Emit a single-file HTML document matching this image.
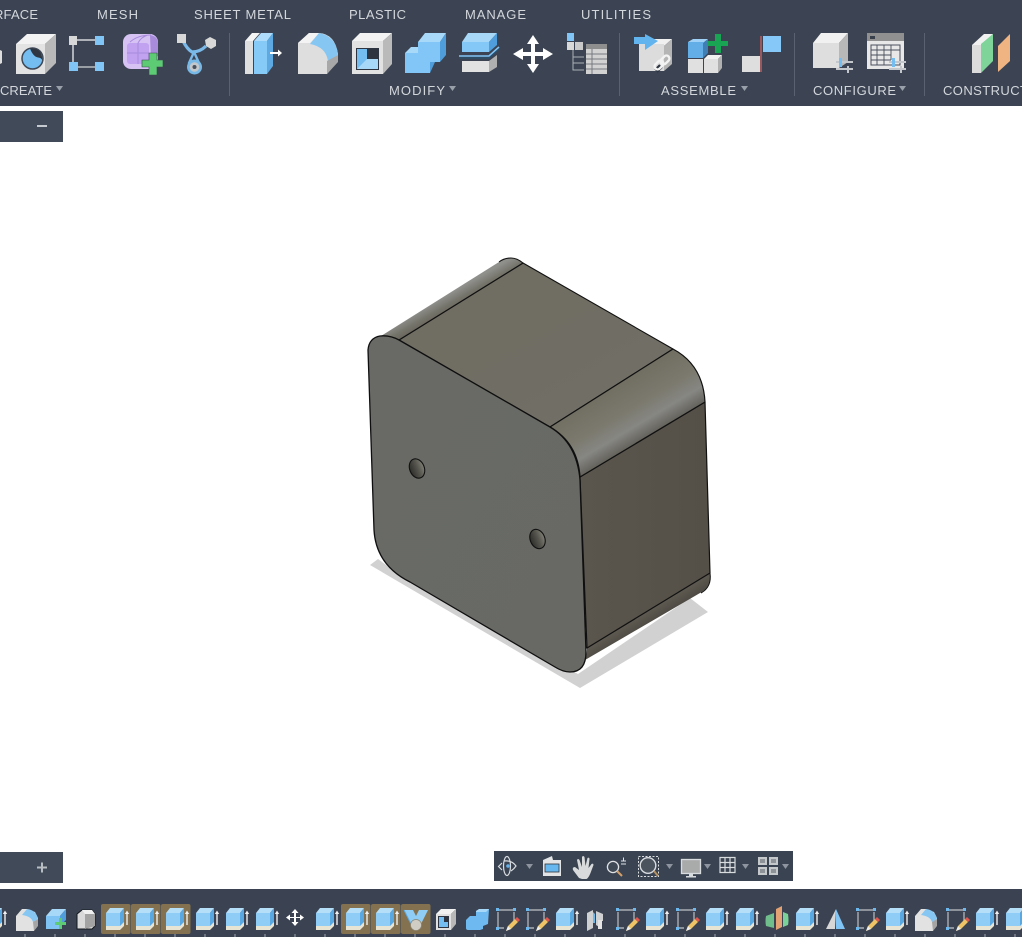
<!DOCTYPE html>
<html>
<head>
<meta charset="utf-8">
<style>
html,body{margin:0;padding:0;background:#fff;width:1022px;height:937px;overflow:hidden}
svg{display:block}
text{font-family:"Liberation Sans",sans-serif;font-size:13px;fill:#d3d7dc}
</style>
</head>
<body>
<svg width="1022" height="937" viewBox="0 0 1022 937" xmlns="http://www.w3.org/2000/svg">
<defs>
<linearGradient id="gFront" x1="0" y1="0" x2="1" y2="1"><stop offset="0" stop-color="#696a66"/><stop offset="1" stop-color="#686964"/></linearGradient>
<linearGradient id="gTop" x1="0" y1="0" x2="1" y2="1"><stop offset="0" stop-color="#6f6c60"/><stop offset="1" stop-color="#716f67"/></linearGradient>
<linearGradient id="gRight" x1="0" y1="0" x2="1" y2="0"><stop offset="0" stop-color="#5a564e"/><stop offset="1" stop-color="#544f47"/></linearGradient>
<linearGradient id="gFilletR" gradientUnits="userSpaceOnUse" x1="611" y1="388" x2="642" y2="440"><stop offset="0" stop-color="#716e62"/><stop offset=".45" stop-color="#7b796d"/><stop offset=".75" stop-color="#868683"/><stop offset="1" stop-color="#63615a"/></linearGradient>
<linearGradient id="gFilletL" gradientUnits="userSpaceOnUse" x1="440" y1="299" x2="448" y2="313"><stop offset="0" stop-color="#8f8f8c"/><stop offset=".55" stop-color="#75746b"/><stop offset="1" stop-color="#66635a"/></linearGradient>
<linearGradient id="gFilletB" gradientUnits="userSpaceOnUse" x1="644" y1="610" x2="655" y2="628"><stop offset="0" stop-color="#625e55"/><stop offset="1" stop-color="#45423c"/></linearGradient>
<linearGradient id="gHole" x1="0" y1="0" x2="1" y2="0"><stop offset="0" stop-color="#2f2f2b"/><stop offset=".55" stop-color="#55544d"/><stop offset="1" stop-color="#807f76"/></linearGradient>

<g id="ex">
<path d="M-9 21h14l4 -4v5l-4 4h-14z" fill="#e8e4d4"/>
<path d="M-9 9h14v13h-14z" fill="#8fcdf6"/>
<path d="M-9 9l4 -5h14l-4 5z" fill="#b5def9"/>
<path d="M5 9l4 -5v14l-4 4z" fill="#5aa8e2"/>
<path d="M12 21v-13" stroke="#f0f0f0" stroke-width="1.400"/>
<path d="M9.800 10l2.200 -3.500 2.200 3.500z" fill="#f0f0f0"/>
</g>
<g id="fi">
<path d="M-10 27v-15l6 -7h5l8 3 3 6v7l-4 3v3z" fill="#e2e2e2"/>
<path d="M-4 11l5 -6q9 1 11 10l-5 3q-2 -6 -11 -7z" fill="#85c6f3"/>
<path d="M7 18l5 -3v7l-4 5z" fill="#a5a5a5"/>
</g>
<g id="sk">
<path d="M-7 6h16M-7 8v16M-7 24h6M9 8v10" stroke="#a9adb3" stroke-width="1.400" fill="none"/>
<rect x="-9" y="4" width="3" height="3" fill="#6db8ee"/><rect x="8" y="4" width="3" height="3" fill="#6db8ee"/><rect x="-9" y="23" width="3" height="3" fill="#6db8ee"/>
<path d="M1 27l2 -5 7 -7 3 3 -7 7z" fill="#efc467"/>
<path d="M10 15l2 -2 3 3 -2 2z" fill="#e0564f"/>
<path d="M1 27l2 -5 3 3z" fill="#eee"/>
</g>
<g id="hl"><rect x="0" y="0" width="29.500" height="30" rx="2" fill="#83714f"/></g>
<rect id="tk" x="-1" y="0" width="2" height="4" fill="#6d7480"/>
<path id="tri" d="M0 0h7l-3.500 5z" fill="#99a0aa"/>
</defs>

<rect width="1022" height="937" fill="#fff"/>

<!-- Top toolbar -->
<rect x="0" y="0" width="1022" height="106" fill="#3c4453"/>
<text x="-6" y="19" textLength="44">RFACE</text>
<text x="97" y="19" textLength="41">MESH</text>
<text x="194" y="19" textLength="97">SHEET METAL</text>
<text x="349" y="19" textLength="57">PLASTIC</text>
<text x="465" y="19" textLength="61">MANAGE</text>
<text x="581" y="19" textLength="70">UTILITIES</text>
<text x="0" y="95" textLength="52">CREATE</text>
<text x="389" y="95" textLength="56">MODIFY</text>
<text x="661" y="95" textLength="75">ASSEMBLE</text>
<text x="813" y="95" textLength="83">CONFIGURE</text>
<text x="943" y="95" textLength="85">CONSTRUCT</text>
<use href="#tri" x="56" y="86"/><use href="#tri" x="449" y="86"/><use href="#tri" x="741" y="86"/><use href="#tri" x="899" y="86"/>
<g fill="#5a6271"><rect x="229" y="33" width="1" height="63"/><rect x="619" y="33" width="1" height="63"/><rect x="794" y="33" width="1" height="63"/><rect x="924" y="33" width="1" height="63"/></g>

<!-- Box with hole -->
<path d="M0 50l2 1v12l-2 1z" fill="#ddd"/>
<path d="M16 44l11 -10h29l-11 10z" fill="#f3f3f3"/>
<path d="M16 44h29v30h-29z" fill="#e3e3e3"/>
<path d="M45 44l11 -10v29l-11 11z" fill="#b9b9b9"/>
<circle cx="32.500" cy="58.500" r="10.500" fill="#73bdf0" stroke="#3f4856" stroke-width="1.500"/>
<path d="M30 48.500q12 -1 12.500 12q-1.500 -3 -4.500 -3q-5 -1 -8 -9z" fill="#2f3743"/>

<!-- Form edit -->
<path d="M77 40h18M73 44v18" stroke="#d5d8db" stroke-width="1.500"/>
<path d="M78 67h17" stroke="#b8bcc0" stroke-width="1.500"/>
<rect x="69" y="36" width="8" height="9" fill="#d8d8d8"/>
<rect x="95" y="36" width="9" height="9" fill="#80c5f6"/>
<rect x="69" y="62" width="9" height="9" fill="#80c5f6"/>
<rect x="95" y="62" width="9" height="9" fill="#80c5f6"/>

<!-- Purple cube -->
<rect x="123" y="34" width="35" height="35" rx="8" fill="#d6c3f4"/>
<rect x="127" y="43" width="22" height="21" rx="3" fill="#c0a2f0"/>
<path d="M150 35q8 1 8 9v12l-7 4z" fill="#a98bdc"/>
<path d="M127 53h22M138 43v21M130 42q8 -7 21 -7M138 43q3 -6 10 -8" stroke="#a98bdc" stroke-width="1" fill="none"/>
<path d="M149 53h8v7h6v7h-6v8h-8v-8h-7v-7h7z" fill="#5ccb73" stroke="#3c4453" stroke-width=".6"/>

<!-- Generative -->
<path d="M183 41q4 8 9 11q8 0 14 -6" stroke="#7ab9e8" stroke-width="3.200" fill="none"/>
<path d="M194 52l-5 11h10z" stroke="#7ab9e8" stroke-width="2.400" fill="#3c4453" stroke-linejoin="round"/>
<rect x="177" y="34" width="9" height="9" fill="#d8d8d8"/>
<path d="M205 40l5 -3 6 3 0 6 -5 3 -5 -3z" fill="#d8d8d8"/>
<circle cx="194.500" cy="67" r="7.500" fill="#78b8e6"/><circle cx="194.500" cy="67" r="4.800" fill="#c5c8cb"/><circle cx="194.500" cy="67" r="2" fill="#4a525f"/>

<!-- Press pull -->
<path d="M245 41h8v33h-8z" fill="#dfdfdf"/><path d="M245 41l7 -8h8l-7 8z" fill="#f4f4f4"/>
<path d="M254 41h13v33h-13z" fill="#86caf8"/><path d="M254 41l7 -8h12l-6 8z" fill="#aedcfa"/><path d="M267 41l6 -8v33l-6 8z" fill="#5ea9e2"/>
<path d="M270 53h9" stroke="#fff" stroke-width="2"/><path d="M278 49.500l4 3.500 -4 3.500z" fill="#fff"/>

<!-- Fillet -->
<path d="M298 74v-31l11 -10h10q16 1 19 21v7l-11 13z" fill="#dedede"/>
<path d="M298 43l11 -10h10l-9 10z" fill="#f3f3f3"/>
<path d="M310 44l9 -11q17 3 19 22l-10 6q-2 -14 -18 -17z" fill="#85c6f3"/>
<path d="M327 74v-13l11 -6v7z" fill="#a8a8a8"/>

<!-- Shell -->
<path d="M352 41l8 -8h32l-9 8z" fill="#f3f3f3"/><path d="M352 41h31v33h-31z" fill="#e2e2e2"/><path d="M383 41l9 -8v31l-9 10z" fill="#bababa"/>
<rect x="356" y="48" width="23" height="22" fill="#2e3541"/>
<path d="M357 49h10v10h11v10h-21z" fill="#73bdf0"/><path d="M357 69l10 -10h11v10z" fill="#a8d8f8"/>

<!-- Combine -->
<path d="M418 42l7 -9h21l-6 9z" fill="#a9d9f9"/>
<path d="M440 42l6 -9v22l-6 7z" fill="#4f9edb"/>
<path d="M418 42h22v20h-22z" fill="#82c6f7"/>
<path d="M405 53l6 -6h7v6z" fill="#a9d9f9"/>
<path d="M405 53h13v9h12v11h-25z" fill="#82c6f7"/>
<path d="M430 62h5l-5 11z" fill="#4f9edb"/>

<!-- Split -->
<path d="M462 42l6 -9h29l-8 9z" fill="#a8d8f8"/><path d="M462 42h27v10h-27z" fill="#84c8f8"/><path d="M489 42l8 -9v12l-8 7z" fill="#4f9edb"/>
<path d="M459 56h30l10 -9" stroke="#7fc4f6" stroke-width="1.600" fill="none"/>
<path d="M459 58h30l10 -9" stroke="#27506f" stroke-width="1.200" fill="none"/>
<path d="M462 61h27v11h-27z" fill="#e2e2e2"/><path d="M489 61l8 -6v12l-8 5z" fill="#b0b0b0"/>

<!-- Move -->
<path d="M533 35l6 9h-4v8h8v-4l10 6 -10 6v-4h-8v8h4l-6 9 -6 -9h4v-8h-8v4l-10 -6 10 -6v4h8v-8h-4z" fill="#fff"/>

<!-- Browser table -->
<rect x="567" y="33" width="7" height="8" fill="#80c5f6"/>
<rect x="567" y="42" width="7" height="8" fill="#d8d8d8"/><rect x="575" y="42" width="8" height="8" fill="#c9c9c9"/>
<path d="M573 50v20h11M573 57h11M573 63h11" stroke="#aab0b6" stroke-width="1" fill="none"/>
<rect x="586" y="44" width="21" height="30" fill="#d2d2d2"/><rect x="586" y="44" width="21" height="5" fill="#8e8e8e"/>
<path d="M586 54h21M586 59h21M586 64h21M586 69h21M592 49v25" stroke="#767b81" stroke-width="1"/>

<!-- Joint -->
<path d="M640 43l9 -4h23l-8 7z" fill="#f0f0f0"/><path d="M639 44h25v27h-25z" fill="#dcdcdc"/><path d="M664 46l8 -7v25l-8 7z" fill="#b5b5b5"/>
<path d="M634 37h11v-3l13 7 -13 9v-6h-11z" fill="#62b4ee"/>
<g fill="none" stroke="#2e3541" stroke-width="5"><path d="M656 71l5 -5"/></g>
<g fill="none" stroke="#f3f3f3" stroke-width="2.400"><rect x="654" y="62" width="10" height="6" rx="3" transform="rotate(-45 659 65)"/><rect x="660" y="57" width="10" height="6" rx="3" transform="rotate(-45 665 60)"/></g>

<!-- As-built -->
<path d="M688 42l5 -3h15l-5 4z" fill="#9fd2f6"/><path d="M688 42h15v16h-15z" fill="#63aee6"/><path d="M703 43l5 -4v14l-5 5z" fill="#3f7fb5"/>
<rect x="688" y="59" width="15" height="14" fill="#e0e0e0"/>
<rect x="704" y="59" width="14" height="14" fill="#e0e0e0"/><path d="M704 59l4 -4h14l-4 4z" fill="#f1f1f1"/><path d="M718 59l4 -4v13l-4 5z" fill="#b0b0b0"/>
<path d="M715 34h6v7h7v5h-7v7h-6v-7h-7v-5h7z" fill="#19a454"/>

<!-- Rigid -->
<rect x="742" y="56" width="18" height="16" fill="#dedede"/>
<path d="M761 36v36" stroke="#d66566" stroke-width="1.200"/>
<rect x="763" y="36" width="18" height="16" fill="#86c9f8"/>

<!-- Configure 1 -->
<path d="M813 43l8 -10h27l-9 10z" fill="#f1f1f1"/><rect x="813" y="43" width="26" height="25" fill="#dedede"/><path d="M839 43l9 -10v29l-9 6z" fill="#b8b8b8"/>
<path d="M836 62h17M836 69h17" stroke="#c3c7cb" stroke-width="2"/>
<rect x="839" y="58" width="3" height="9" fill="#74bdf1"/><rect x="847" y="66" width="2" height="7" fill="#c3c7cb"/>

<!-- Configure 2 -->
<rect x="867" y="33" width="37" height="36" fill="#e8e8e8"/><rect x="867" y="33" width="37" height="8" fill="#909090"/><rect x="870" y="36" width="5" height="3" fill="#3a404b"/>
<rect x="871" y="45" width="29" height="20" fill="#e8e8e8" stroke="#4a505b" stroke-width="1"/>
<path d="M871 50h29M871 55h20M871 60h20M877 45v20M884 45v20M891 45v15" stroke="#4a505b" stroke-width=".9"/>
<path d="M889 62h17M889 69h17" stroke="#c3c7cb" stroke-width="2"/><rect x="892" y="58" width="3" height="9" fill="#74bdf1"/><rect x="900" y="66" width="2" height="7" fill="#c3c7cb"/>

<!-- Construct -->
<path d="M972 45h9v28h-9z" fill="#dcdcdc"/><path d="M972 45l12 -11h9l-12 11z" fill="#f1f1f1"/>
<path d="M981 44l12 -10v27l-12 12z" fill="#7fd49a"/>
<path d="M998 46l12 -12v27l-12 11z" fill="#f0b483"/>

<!-- Left panels -->
<rect x="0" y="111" width="63" height="31" fill="#414a59"/><rect x="37" y="125" width="10" height="2" fill="#c5cad0"/>
<rect x="0" y="852" width="63" height="31" fill="#414a59"/><path d="M37 867.500h10M42 862.500v10" stroke="#b8bdc4" stroke-width="2"/>

<!-- 3D Model shadow -->
<path d="M370 565l8 -6 30 22 170 93 112 -76 18 14 -128 76z" fill="#d0d1d0"/>

<!-- Bottom fillet -->
<path d="M587 648L710 573q2 14 -10 20L585 660q2 -6 2 -12z" fill="url(#gFilletB)"/>
<path d="M710 573q2 14 -9 20" fill="none" stroke="#111" stroke-width="1"/>
<!-- Right face -->
<path d="M580 477L705 402 710 573 587 648z" fill="url(#gRight)" stroke="#111" stroke-width="1.200" stroke-linejoin="round"/>
<!-- Top face -->
<path d="M399 340L523 263 673 349 550 427z" fill="url(#gTop)" stroke="#111" stroke-width="1.100" stroke-linejoin="round"/>
<!-- Left fillet -->
<path d="M381 336L499 262q5 -4 12 -4q6 0 12 5L399 340q-8 -4 -18 -4z" fill="url(#gFilletL)" stroke="none"/>
<path d="M399 340L523 263q-6 -5 -12 -5q-7 0 -12 4" fill="none" stroke="#111" stroke-width="1.100"/>
<!-- Right fillet -->
<path d="M673 349q30 16 32 53L580 477q-2 -34 -30 -50z" fill="url(#gFilletR)" stroke="#111" stroke-width="1.200" stroke-linejoin="round"/>
<!-- Front face -->
<path d="M368 350Q369 338 380 336Q390 335 399 340L550 427Q577 443 580 480L586 652Q586 672 570 672Q563 672 555 667L410 582Q376 565 374 530Z" fill="url(#gFront)" stroke="#0f0f0f" stroke-width="1.300" stroke-linejoin="round"/>
<!-- Holes -->
<ellipse cx="417" cy="468.500" rx="7.300" ry="10" transform="rotate(-22 417 468.500)" fill="url(#gHole)" stroke="#111" stroke-width="1.100"/>
<ellipse cx="537.500" cy="539" rx="7.300" ry="10" transform="rotate(-22 537.500 539)" fill="url(#gHole)" stroke="#111" stroke-width="1.100"/>

<!-- Nav bar -->
<rect x="494" y="851" width="299" height="30" fill="#3a4351"/>
<g fill="none" stroke="#d8dce0" stroke-width="1.200">
<path d="M502 863l-3.500 3.500 3.500 3.500"/><ellipse cx="507" cy="866" rx="3.500" ry="9.500"/><path d="M504 861q8 -1 12 5q-2 3 -5 5"/>
</g>
<circle cx="508" cy="866" r="1.800" fill="#66b2ea"/>
<path d="M526 864h7l-3.500 5z" fill="#8e95a0"/>
<path d="M543 860l9 -4 1 4 8 0v16h-18z" fill="#e2e4e6"/><rect x="545" y="864" width="14" height="8" fill="#66b7f0" stroke="#30363f" stroke-width=".8"/>
<path d="M582 879l-3 -1 -6 -8q-1 -3 2 -3l4 3 -2 -10q1 -2 2.500 0l2.500 7 0 -10q1 -2 2.500 0l1 9 2 -8q2 -1 2 1l-1 9 3 -4q2 -1 2 1l-3 8q-2 5 -4 6z" fill="#d8dadc"/>
<circle cx="613" cy="867" r="5.600" fill="#3f4855" stroke="#e0e3e6" stroke-width="1.300"/>
<path d="M617 871l5 5" stroke="#d3a06a" stroke-width="2"/>
<path d="M621 861h5M623.500 857.500v4M621 864h5" stroke="#e0e3e6" stroke-width="1"/>
<rect x="638.500" y="856.500" width="20" height="20" fill="none" stroke="#d8dce0" stroke-width="1" stroke-dasharray="2 1.500"/>
<circle cx="648" cy="865.500" r="7.800" fill="#4b535f" stroke="#d8dce0" stroke-width="1.400"/>
<path d="M654 871l4 5" stroke="#b5905f" stroke-width="2"/>
<path d="M666 864h7l-3.500 5z" fill="#8e95a0"/>
<rect x="681.500" y="859.500" width="19" height="14" fill="#a9abab" stroke="#d9dcdf" stroke-width="1.300"/><path d="M689 874h4v2h3v1.500h-10v-1.500h3z" fill="#d9dcdf"/>
<path d="M704 864h7l-3.500 5z" fill="#8e95a0"/>
<path d="M720 857.500h15v15h-15zM725 857.500v15M730 857.500v15M720 862.500h15M720 867.500h15" fill="none" stroke="#d9dcdf" stroke-width="1.200"/>
<path d="M742 864h7l-3.500 5z" fill="#8e95a0"/>
<g fill="#c5c8cb"><rect x="758" y="857" width="9" height="8"/><rect x="769" y="857" width="9" height="8"/><rect x="758" y="867" width="9" height="8"/><rect x="769" y="867" width="9" height="8"/></g>
<g fill="#8d9298"><rect x="760" y="859" width="5" height="4"/><rect x="771" y="859" width="5" height="4"/><rect x="760" y="869" width="5" height="4"/><rect x="771" y="869" width="5" height="4"/></g>
<path d="M782 864h7l-3.500 5z" fill="#8e95a0"/>

<!-- Timeline -->
<rect x="0" y="889" width="1022" height="48" fill="#3b4352"/>
<use href="#hl" x="101" y="904"/><use href="#hl" x="131" y="904"/><use href="#hl" x="161" y="904"/>
<use href="#hl" x="341" y="904"/><use href="#hl" x="371" y="904"/><use href="#hl" x="401" y="904"/>
<g>
<use href="#tk" x="25" y="934"/><use href="#tk" x="55" y="934"/><use href="#tk" x="85" y="934"/><use href="#tk" x="115" y="934"/><use href="#tk" x="145" y="934"/><use href="#tk" x="175" y="934"/><use href="#tk" x="205" y="934"/><use href="#tk" x="235" y="934"/><use href="#tk" x="265" y="934"/><use href="#tk" x="295" y="934"/><use href="#tk" x="325" y="934"/><use href="#tk" x="355" y="934"/><use href="#tk" x="385" y="934"/><use href="#tk" x="415" y="934"/><use href="#tk" x="445" y="934"/><use href="#tk" x="475" y="934"/><use href="#tk" x="505" y="934"/><use href="#tk" x="535" y="934"/><use href="#tk" x="565" y="934"/><use href="#tk" x="595" y="934"/><use href="#tk" x="625" y="934"/><use href="#tk" x="655" y="934"/><use href="#tk" x="685" y="934"/><use href="#tk" x="715" y="934"/><use href="#tk" x="745" y="934"/><use href="#tk" x="775" y="934"/><use href="#tk" x="805" y="934"/><use href="#tk" x="835" y="934"/><use href="#tk" x="865" y="934"/><use href="#tk" x="895" y="934"/><use href="#tk" x="925" y="934"/><use href="#tk" x="955" y="934"/><use href="#tk" x="985" y="934"/><use href="#tk" x="1015" y="934"/>
</g>
<use href="#ex" x="-7" y="904"/>
<use href="#fi" x="26" y="904"/>
<path d="M46 916l6 -7h14l-6 7z" fill="#a8d8f8"/><rect x="46" y="916" width="14" height="13" fill="#7ec3f4"/><path d="M60 916l6 -7v11l-6 6z" fill="#4f9edb"/>
<path d="M59 918h3v4h4v3h-4v4h-3v-4h-4v-3h4z" fill="#5ccb73"/>
<path d="M77 914l5 -4h10l3 4v12l-3 3h-15z" fill="#d9d9d9" stroke="#14181d" stroke-width="1"/><path d="M82 910h10l3 4h-10z" fill="#f0f0f0"/><path d="M85 914h10v12l-10 3z" fill="#a3a3a3"/>
<use href="#ex" x="115" y="904"/><use href="#ex" x="145" y="904"/><use href="#ex" x="175" y="904"/>
<use href="#ex" x="205" y="904"/><use href="#ex" x="235" y="904"/><use href="#ex" x="265" y="904"/>
<path d="M295 909l3.500 4h-2.500v4h4v-2.500l4 3 -4 3v-2.500h-4v4h2.500l-3.500 4 -3.500 -4h2.500v-4h-4v2.500l-4 -3 4 -3v2.500h4v-4h-2.500z" fill="#fff"/>
<use href="#ex" x="325" y="904"/><use href="#ex" x="355" y="904"/><use href="#ex" x="385" y="904"/>
<path d="M404 910h9l3 6 3 -6h9l-8 16h-8z" fill="#8fcdf6"/><path d="M404 910l8 16" stroke="#5aa8e2"/>
<circle cx="416" cy="925" r="5.500" fill="#cfcdc4" stroke="#8e8672" stroke-width=".7"/>
<path d="M436 914l5 -5h15l-5 5z" fill="#f1f1f1"/><rect x="436" y="914" width="15" height="16" fill="#e0e0e0"/><path d="M451 914l5 -5v15l-5 6z" fill="#b8b8b8"/><rect x="438" y="916" width="11" height="12" fill="#2e3541"/><path d="M439 917h5v5h4v5h-9z" fill="#73bdf0"/>
<path d="M466 920l4 -4h6v-5l4 -2h9l-1 15l-5 2v3l-3 1h-12q-2 0 -2 -2z" fill="#6fb9f1"/><path d="M476 911l3 -2h10l-3 3h-10z" fill="#a8d8f8"/>
<use href="#sk" x="505" y="904"/><use href="#sk" x="535" y="904"/>
<use href="#ex" x="565" y="904"/>
<path d="M587 913l6 -3v18l-6 3zM596 911l7 3v7h-2v7l-5 -3z" fill="#cfd0d1"/><path d="M593 912l2 2v9h-2z" fill="#70b7ea"/><path d="M598 920h4v9h-4z" fill="#e5e5e5"/>
<use href="#sk" x="625" y="904"/>
<use href="#ex" x="655" y="904"/>
<use href="#sk" x="685" y="904"/>
<use href="#ex" x="715" y="904"/><use href="#ex" x="745" y="904"/>
<path d="M766 916l8 -3v15l-8 -2q-1 -5 0 -10z" fill="#6fbe8b"/><path d="M776 909l6 -3v21l-6 3z" fill="#e3a273"/><path d="M783 912l5 2q1 7 0 11l-5 2z" fill="#7bd299"/>
<use href="#ex" x="805" y="904"/>
<path d="M836 909l-1 20h-9z" fill="#d7d7d7"/><path d="M836 909l9 20h-9z" fill="#80c5f6"/>
<use href="#sk" x="865" y="904"/>
<use href="#ex" x="895" y="904"/>
<use href="#fi" x="925" y="904"/>
<use href="#sk" x="955" y="904"/>
<use href="#ex" x="985" y="904"/>
<use href="#ex" x="1015" y="904"/>
</svg>
</body>
</html>
